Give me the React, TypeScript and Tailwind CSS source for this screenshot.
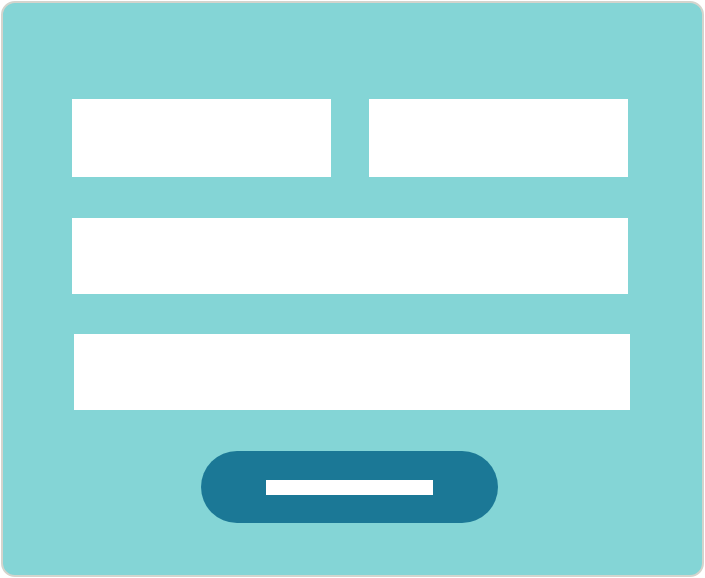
import React from "react";

const FormCard: React.FC = () => {
  return (
    <div className="w-[705px] h-[578px] p-[1px] bg-white">
      {/* teal card with grey edge */}
      <div className="h-full w-full rounded-[14px] border-2 border-[#d4d4cd] bg-[#84d5d6] pt-[96px] pl-[69px]">
        <div className="flex gap-[38px]">
          <div className="w-[259px] h-[78px] bg-white" />
          <div className="w-[259px] h-[78px] bg-white" />
        </div>
        <div className="mt-[41px] w-[556px] h-[76px] bg-white" />
        <div className="mt-[40px] ml-[2px] w-[556px] h-[76px] bg-white" />
        {/* submit button */}
        <div className="mt-[41px] ml-[129px] w-[297px] h-[72px] rounded-full bg-[#1b7896] flex items-center justify-center">
          <div className="w-[167px] h-[15px] bg-white" />
        </div>
      </div>
    </div>
  );
};

export default function App() {
  return <FormCard />;
}
